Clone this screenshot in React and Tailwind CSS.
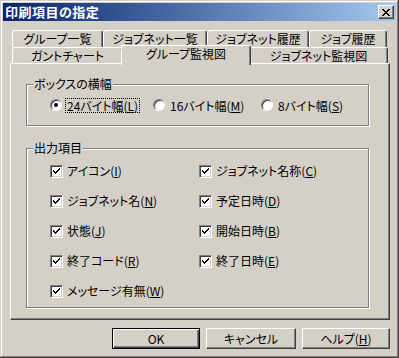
import React from "react";

function Mn({k}){
  // mnemonic letter in parentheses, underlined
  return <span>(<u className="underline-offset-[1px]">{k}</u>)</span>;
}

function Tab({w, label}){
  return (
    <div className={`${w} h-full flex items-center justify-center border-t border-l border-white border-r border-r-[#404040] rounded-t-[3px] shadow-[inset_-1px_0_#808080] text-[12px] text-black`}>
      {label}
    </div>
  );
}

function Radio({checked, children, focus}){
  return (
    <div className="flex items-center">
      <div className="w-[12px] h-[12px] rounded-full border border-t-[#808080] border-l-[#808080] border-b-white border-r-white flex items-center justify-center">
        <div className="w-[10px] h-[10px] rounded-full bg-white shadow-[inset_1px_1px_#404040] flex items-center justify-center">
          {checked && <div className="w-[4px] h-[4px] rounded-full bg-black"></div>}
        </div>
      </div>
      <div className={`ml-[3px] px-[1px] leading-[13px] border ${focus ? "border-dotted border-black" : "border-transparent"}`}>{children}</div>
    </div>
  );
}

function Check({children}){
  return (
    <div className="flex items-center h-[30px]">
      <div className="w-[13px] h-[13px] bg-white border border-t-[#808080] border-l-[#808080] border-b-white border-r-white shadow-[inset_1px_1px_#404040,inset_-1px_-1px_#d4d0c8] flex items-center justify-center">
        <svg width="9" height="9" viewBox="0 0 9 9" shapeRendering="crispEdges">
          <path d="M1 3 L1 5 L3 7 L8 2 L8 0 L3 5 Z" fill="black" />
        </svg>
      </div>
      <div className="ml-[4px]">{children}</div>
    </div>
  );
}

function GroupBox({label, className, children}){
  return (
    <div className={`relative border border-[#808080] shadow-[inset_1px_1px_#fff,1px_1px_#fff] ${className}`}>
      <span className="absolute -top-[8px] left-[6px] px-[1px] bg-[#d4d0c8] text-[12px] leading-[14px]">{label}</span>
      {children}
    </div>
  );
}

function Btn({w, def, children}){
  const edge = def
    ? "border border-black shadow-[inset_1px_1px_#fff,inset_-1px_-1px_#404040,inset_-2px_-2px_#808080]"
    : "border border-t-white border-l-white border-b-[#404040] border-r-[#404040] shadow-[inset_-1px_-1px_#808080]";
  return (
    <div className={`${w} h-[21px] flex items-center justify-center text-[12px] bg-[#d4d0c8] ${edge}`}>{children}</div>
  );
}

export default function App(){
  return (
    <div className={`w-[399px] h-[358px] bg-[#d4d0c8] p-[3px] flex flex-col text-black text-[12px] font-['Noto_Sans_CJK_JP','Liberation_Sans',sans-serif] [font-feature-settings:"palt"] shadow-[inset_-1px_-1px_#404040,inset_1px_1px_#d4d0c8,inset_-2px_-2px_#808080,inset_2px_2px_#fff]`}>
      {/* title bar */}
      <div className="h-[18px] flex items-center justify-between bg-linear-to-r from-[#0a246a] to-[#a6caf0] pl-[2px] pr-[2px]">
        <span className="text-white font-bold text-[13px] tracking-[0.5px]">印刷項目の指定</span>
        <div className="w-[16px] h-[14px] bg-[#d4d0c8] border border-t-white border-l-white border-b-[#404040] border-r-[#404040] shadow-[inset_-1px_-1px_#808080] flex items-center justify-center">
          <svg width="8" height="7" viewBox="0 0 8 7" shapeRendering="crispEdges">
            <path d="M0 0h2v1h-2z M6 0h2v1h-2z M1 1h2v1h-2z M5 1h2v1h-2z M2 2h4v1h-4z M3 3h2v1h-2z M2 4h4v1h-4z M1 5h2v1h-2z M5 5h2v1h-2z M0 6h2v1h-2z M6 6h2v1h-2z" fill="black" />
          </svg>
        </div>
      </div>

      <div className="pl-[7px] flex flex-col">
        {/* tabs */}
        <div className="mt-[9px] ml-[2px] flex h-[17px]">
          <Tab w="w-[91px]" label="グループ一覧" />
          <Tab w="w-[104px]" label="ジョブネット一覧" />
          <Tab w="w-[102px]" label="ジョブネット履歴" />
          <Tab w="w-[78px]" label="ジョブ履歴" />
        </div>
        <div className="ml-[2px] flex h-[16px]">
          <Tab w="w-[111px]" label="ガントチャート" />
          <div className="relative z-10 w-[130px] h-[20px] -mt-[2px] -mx-[2px] bg-[#d4d0c8] flex items-start justify-center pt-[1px] leading-[14px] border-t border-l border-white border-r border-r-[#404040] rounded-t-[3px] shadow-[inset_-1px_0_#808080]">
            グループ監視図
          </div>
          <Tab w="w-[139px]" label="ジョブネット監視図" />
        </div>

        {/* panel */}
        <div className="w-[380px] h-[257px] border border-t-white border-l-white border-r-[#404040] border-b-[#404040] shadow-[inset_-1px_-1px_#808080] pl-[15px] pt-[20px] flex flex-col">
          <GroupBox label="ボックスの横幅" className="w-[343px] h-[42px] flex items-center pl-[23px]">
            <div className="w-[103px]"><Radio checked focus>24バイト幅<Mn k="L" /></Radio></div>
            <div className="w-[108px]"><Radio>16バイト幅<Mn k="M" /></Radio></div>
            <Radio>8バイト幅<Mn k="S" /></Radio>
          </GroupBox>

          <GroupBox label="出力項目" className="mt-[22px] w-[343px] h-[160px] pl-[23px] pt-[7px]">
            <div className="grid grid-cols-[149px_auto]">
              <Check>アイコン<Mn k="I" /></Check>
              <Check>ジョブネット名称<Mn k="C" /></Check>
              <Check>ジョブネット名<Mn k="N" /></Check>
              <Check>予定日時<Mn k="D" /></Check>
              <Check>状態<Mn k="J" /></Check>
              <Check>開始日時<Mn k="B" /></Check>
              <Check>終了コード<Mn k="R" /></Check>
              <Check>終了日時<Mn k="E" /></Check>
              <Check>メッセージ有無<Mn k="W" /></Check>
            </div>
          </GroupBox>
        </div>

        {/* buttons */}
        <div className="mt-[8px] w-[380px] flex justify-end gap-[6px]">
          <Btn w="w-[88px]" def>OK</Btn>
          <Btn w="w-[90px]">キャンセル</Btn>
          <Btn w="w-[88px]">ヘルプ<Mn k="H" /></Btn>
        </div>
      </div>
    </div>
  );
}
